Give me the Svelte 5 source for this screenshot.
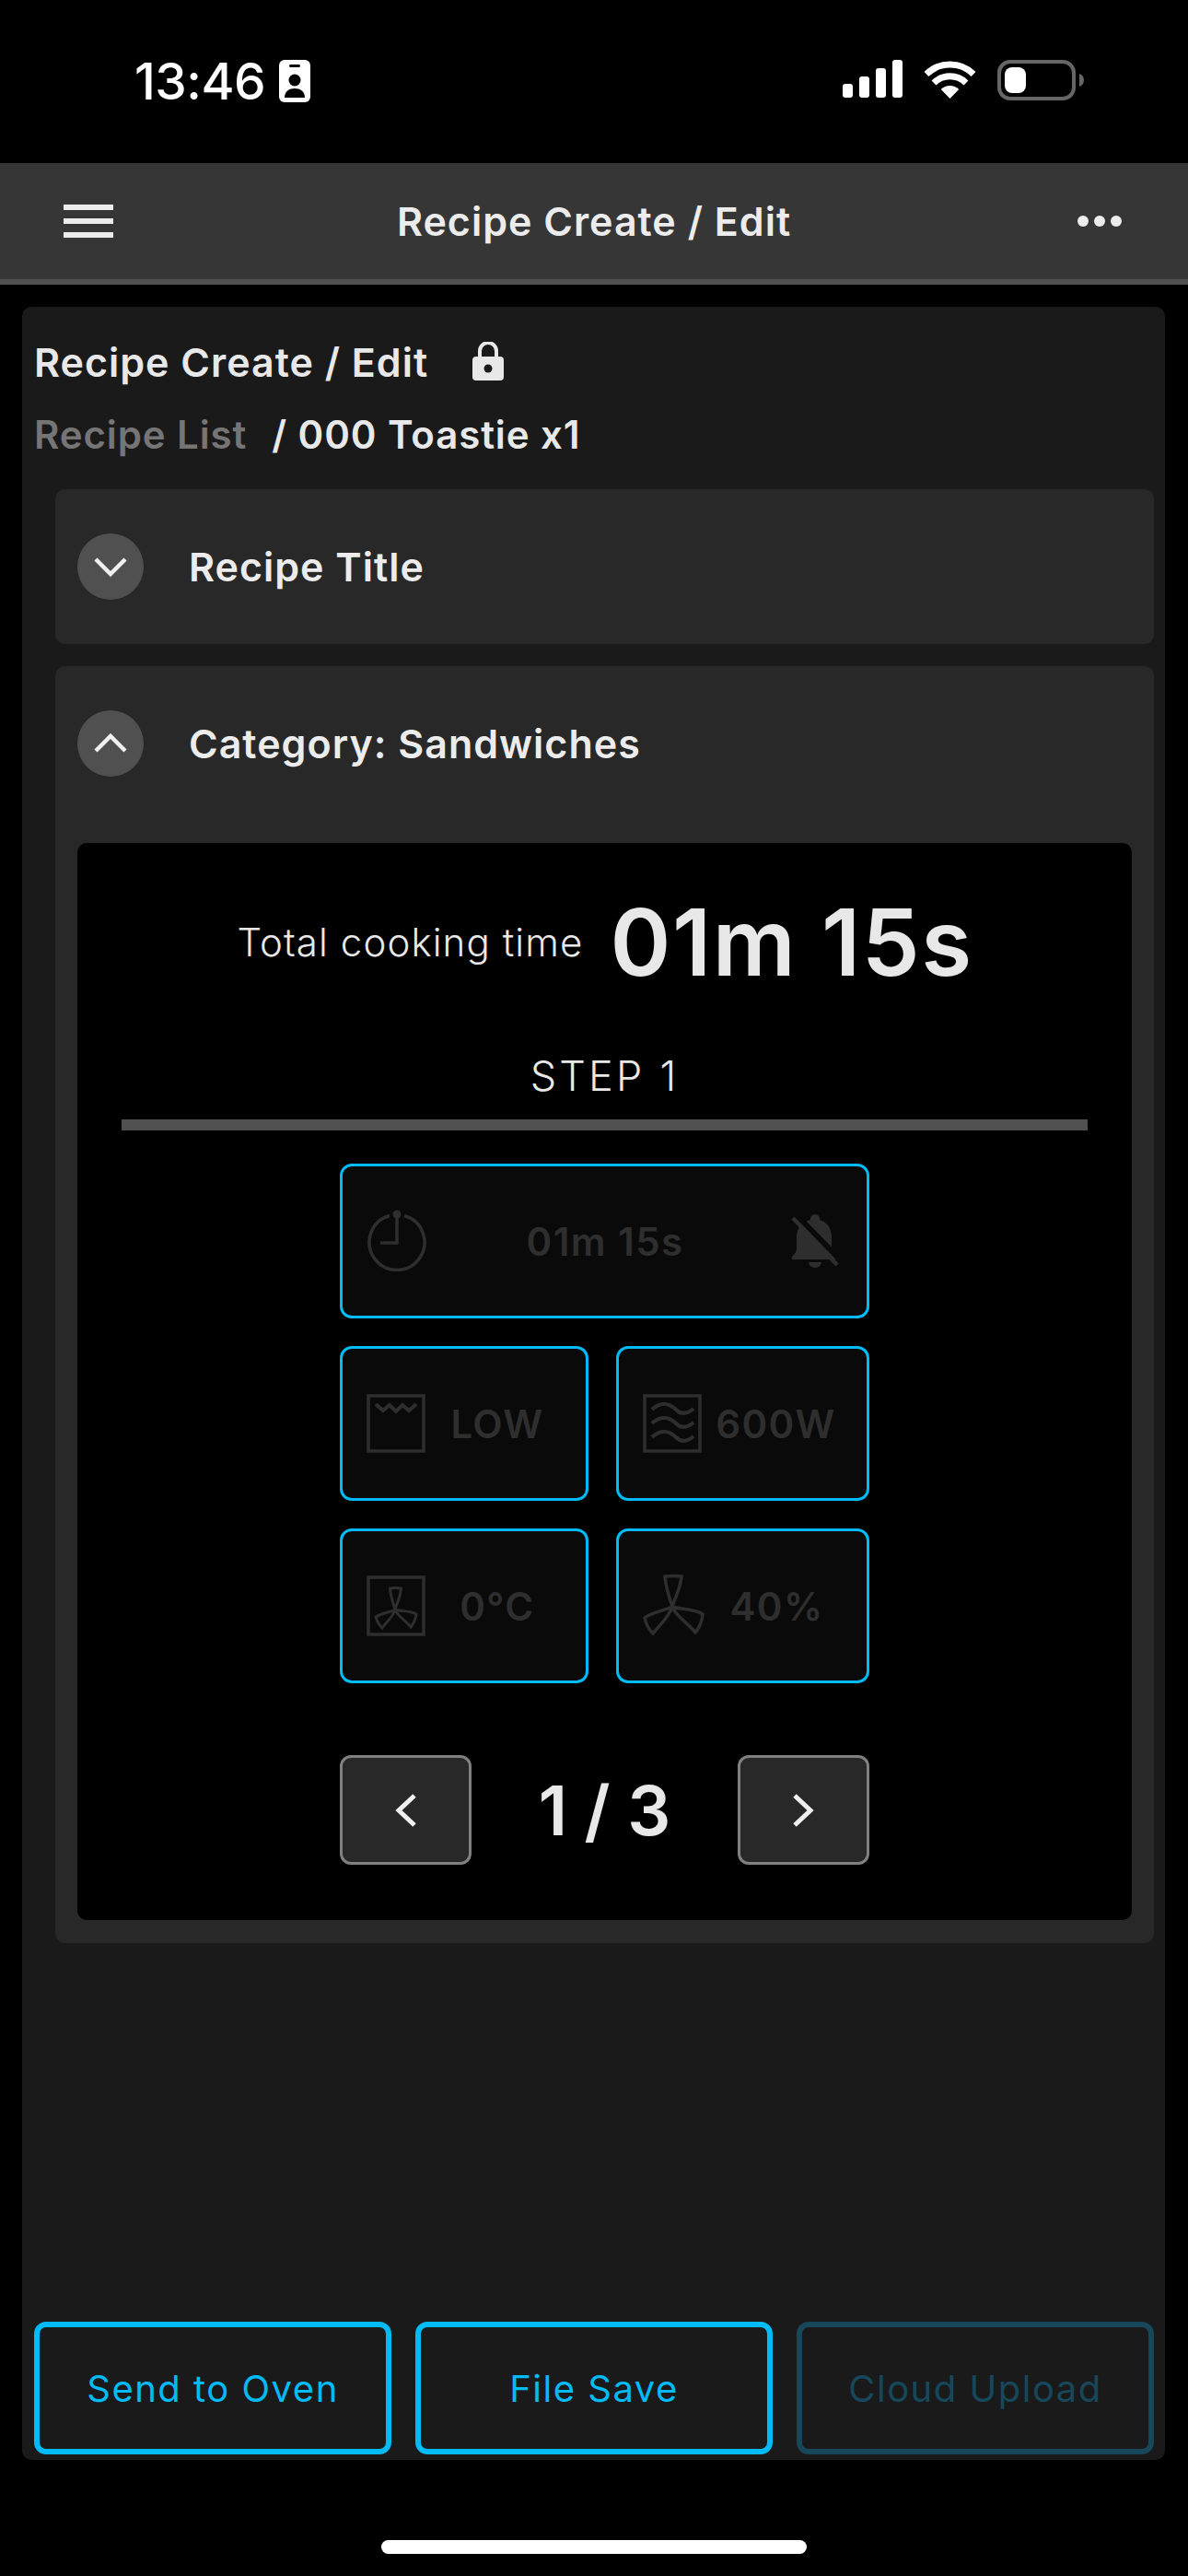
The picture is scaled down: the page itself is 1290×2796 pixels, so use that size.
<script>
  const cells = [
    { id: 'oven', label: 'LOW' },
    { id: 'micro', label: '600W' },
    { id: 'boxfan', label: '0°C' },
    { id: 'fan', label: '40%' }
  ];
  const blades = 'M32 34C29 24 25 14 24 1Q33 0 42 1C41 14 35 24 32 34C24 38 10 40 2 46Q4 56 11 63C18 54 28 46 32 34C40 37 56 36 65 42Q64 54 57 62C50 52 37 46 32 34Z';
  const smallBlades = 'M31 37C29 30 26 23 25.500 14Q31 13 37.500 14C37 23 33 30 31 37C26 40 16 41 10 45Q12 52 17 57C21 51 29 45 31 37C37 39 48 38 54 42Q53 50 48 56C43 49 34 45 31 37Z';
</script>

<div class="phone">
  <div class="status">
    <div class="clock">
      <span class="time">13:46</span>
      <svg class="badge" viewBox="0 0 34 46" width="34" height="46" aria-hidden="true">
        <rect width="34" height="46" rx="6" fill="#fff"/>
        <rect x="11" y="5" width="12" height="3" rx="1.5" fill="#000"/>
        <circle cx="17" cy="22" r="6.5" fill="#000"/>
        <path d="M6 41c0-7 5-10 11-10s11 3 11 10z" fill="#000"/>
      </svg>
    </div>
    <div class="indicators">
      <svg viewBox="0 0 65 41" width="65" height="41" fill="#fff" aria-hidden="true">
        <rect y="26" width="11" height="15" rx="3"/>
        <rect x="18" y="18" width="11" height="23" rx="3"/>
        <rect x="36" y="9" width="11" height="32" rx="3"/>
        <rect x="54" width="11" height="41" rx="3"/>
      </svg>
      <svg viewBox="0 0 57 42" width="57" height="42" aria-hidden="true">
        <path d="M3 15.5A36.500 36.500 0 0 1 54 15.500M11 25A25 25 0 0 1 46 25" fill="none" stroke="#fff" stroke-width="7"/>
        <path d="M28.500 42L18.800 32A14 14 0 0 1 38.200 32Z" fill="#fff"/>
      </svg>
      <svg viewBox="0 0 94 44" width="94" height="44" aria-hidden="true">
        <rect x="2" y="2" width="81" height="40" rx="12" fill="none" stroke="#666" stroke-width="4"/>
        <rect x="8" y="8" width="23" height="28" rx="8" fill="#fff"/>
        <path d="M89 15c3 1 5 3.500 5 7s-2 6-5 7z" fill="#666"/>
      </svg>
    </div>
  </div>

  <header class="topbar">
    <div class="burger"><i></i><i></i><i></i></div>
    <h1>Recipe Create / Edit</h1>
    <div class="dots"><i></i><i></i><i></i></div>
  </header>

  <main class="panel">
    <div class="title-row">
      <span>Recipe Create / Edit</span>
      <svg class="lock" viewBox="0 0 34 42" width="34" height="42" aria-hidden="true">
        <path d="M8 18V10a9 9 0 0 1 18 0v8" fill="none" stroke="#e8e8e8" stroke-width="4"/>
        <rect y="16" width="34" height="26" rx="4" fill="#e8e8e8"/>
        <circle cx="17" cy="29" r="4.500" fill="#1a1a1a"/>
      </svg>
    </div>
    <div class="crumbs"><span class="muted">Recipe List</span><span>/ 000 Toastie x1</span></div>

    <section class="acc">
      <div class="acc-head">
        <span class="round">
          <svg viewBox="0 0 36 22" width="36" height="22" aria-hidden="true"><path d="M2 3L18 19L34 3" fill="none" stroke="#f0f0f0" stroke-width="4.500"/></svg>
        </span>
        <span>Recipe Title</span>
      </div>
    </section>

    <section class="acc open">
      <div class="acc-head">
        <span class="round">
          <svg viewBox="0 0 36 22" width="36" height="22" aria-hidden="true"><path d="M2 19L18 3L34 19" fill="none" stroke="#f0f0f0" stroke-width="4.500"/></svg>
        </span>
        <span>Category: Sandwiches</span>
      </div>

      <div class="card">
        <div class="total">
          <span class="total-label">Total cooking time</span>
          <span class="total-value">01m 15s</span>
        </div>
        <div class="step">STEP 1</div>
        <div class="rule"></div>

        <div class="grid">
          <div class="cell wide">
            <svg class="ico" viewBox="0 0 64 68" width="64" height="68" aria-hidden="true">
              <path d="M24 6.500A30 30 0 1 0 40 6.500" fill="none" stroke="#2e2e2e" stroke-width="3.500"/>
              <circle cx="32" cy="5" r="4.500" fill="#2e2e2e"/>
              <path d="M32 8V36H14" fill="none" stroke="#2e2e2e" stroke-width="3.500"/>
            </svg>
            <span class="val">01m 15s</span>
            <svg class="bell" viewBox="0 0 52 58" width="52" height="58" aria-hidden="true">
              <path d="M26 0a5 5 0 0 1 5 6c9 3 13 10 13 19v12c0 5 3 6 5 9v3H1v-3c2-3 5-4 5-9V25c0-9 4-16 15-19a5 5 0 0 1 5-6z" fill="#2e2e2e"/>
              <path d="M19 52h14a7 6 0 0 1-14 0z" fill="#2e2e2e"/>
              <path d="M5 0L56 52" stroke="#0a0a0a" stroke-width="6"/>
              <path d="M2 4L50 55" stroke="#2e2e2e" stroke-width="4.500"/>
            </svg>
          </div>

          {#each cells as c}
            <div class="cell">
              {#if c.id === 'oven'}
                <svg class="ico" viewBox="0 0 64 64" width="64" height="64" fill="none" stroke="#2e2e2e" aria-hidden="true">
                  <rect x="2" y="2" width="60" height="60" stroke-width="3.500"/>
                  <path d="M10 11L18 18L25 12L32 19L39 12L46 18L54 11" stroke-width="4"/>
                </svg>
              {:else if c.id === 'micro'}
                <svg class="ico" viewBox="0 0 64 64" width="64" height="64" fill="none" stroke="#2e2e2e" aria-hidden="true">
                  <rect x="2" y="2" width="60" height="60" stroke-width="3.500"/>
                  <path d="M10 17C20 7 30 11 36 17S48 22 55 16M10 32C20 22 30 26 36 32S48 37 55 31M10 47C20 37 30 41 36 47S48 52 55 46" stroke-width="4"/>
                </svg>
              {:else if c.id === 'boxfan'}
                <svg class="ico" viewBox="0 0 64 66" width="64" height="66" fill="none" stroke="#2e2e2e" aria-hidden="true">
                  <rect x="2" y="2" width="60" height="62" stroke-width="3.500"/>
                  <path d={smallBlades} stroke-width="3"/>
                </svg>
              {:else}
                <svg class="ico" viewBox="0 0 66 66" width="66" height="66" fill="none" stroke="#2e2e2e" stroke-width="3.500" aria-hidden="true">
                  <path d={blades}/>
                </svg>
              {/if}
              <span class="val">{c.label}</span>
            </div>
          {/each}
        </div>

        <div class="pager">
          <button class="page-btn" aria-label="Previous">
            <svg viewBox="0 0 24 36" width="24" height="36" aria-hidden="true"><path d="M21 2L4 18L21 34" fill="none" stroke="#f0f0f0" stroke-width="5"/></svg>
          </button>
          <span class="page-num">1 / 3</span>
          <button class="page-btn" aria-label="Next">
            <svg viewBox="0 0 24 36" width="24" height="36" aria-hidden="true"><path d="M3 2L20 18L3 34" fill="none" stroke="#f0f0f0" stroke-width="5"/></svg>
          </button>
        </div>
      </div>
    </section>

    <footer class="actions">
      <button class="action">Send to Oven</button>
      <button class="action">File Save</button>
      <button class="action off">Cloud Upload</button>
    </footer>
  </main>

  <div class="home"><i></i></div>
</div>

<style>
:global(body) { margin: 0; background: #000; }

.phone {
  width: 1290px; height: 2796px;
  display: flex; flex-direction: column;
  background: #000;
  font-family: Inter, "Liberation Sans", sans-serif;
  color: #e8e8e8;
  overflow: hidden;
}

.status {
  height: 177px;
  flex-shrink: 0;
  display: flex; justify-content: space-between;
  padding: 65px 113px 0 146px;
  box-sizing: border-box;
}
.clock { display: flex; align-items: flex-start; gap: 15px; }
.time { font-size: 55px; line-height: 46px; font-weight: 500; color: #fff; letter-spacing: -0.5px; }
.indicators { display: flex; align-items: flex-start; gap: 23px; }

.topbar {
  height: 132px;
  flex-shrink: 0;
  box-sizing: border-box;
  background: #363636;
  border-bottom: 6px solid #505050;
  display: flex; align-items: center; justify-content: space-between;
  padding: 0 72px 0 69px;
}
.topbar h1 {
  margin: 0 0 0 -3px;
  font-size: 43px; font-weight: 600;
  letter-spacing: 1px;
  color: #ececec;
}
.burger { display: flex; flex-direction: column; gap: 9px; width: 54px; }
.burger i { display: block; height: 6px; background: #ececec; }
.dots { display: flex; gap: 6px; }
.dots i { display: block; width: 12px; height: 12px; border-radius: 50%; background: #ececec; }

.panel {
  flex: 1;
  margin: 24px 25px 0 24px;
  padding: 21px 12px 6px 13px;
  background: #1a1a1a;
  border-radius: 10px;
  display: flex; flex-direction: column;
}

.title-row, .crumbs {
  height: 78px;
  display: flex; align-items: center;
  font-size: 43px; font-weight: 600;
  letter-spacing: 1px;
  color: #e8e8e8;
}
.lock { margin-left: 48px; margin-top: -2px; }
.crumbs { gap: 27px; margin-bottom: 21px; font-size: 42px; letter-spacing: 0.9px; }
.muted { color: #757575; }

.acc {
  margin-left: 23px;
  background: #282828;
  border-radius: 10px;
}
.acc + .acc { margin-top: 24px; }
.acc-head {
  height: 168px;
  display: flex; align-items: center; gap: 49px;
  padding-left: 24px;
  font-size: 43px; font-weight: 600;
  letter-spacing: 1px;
  color: #ececec;
}
.round {
  width: 72px; height: 72px;
  border-radius: 50%;
  background: #505050;
  display: flex; align-items: center; justify-content: center;
}
.open { padding-bottom: 25px; }

.card {
  margin: 24px 24px 0;
  padding: 57px 48px 60px;
  background: #000;
  border-radius: 10px;
}
.total {
  height: 100px;
  display: flex; align-items: center; justify-content: center; gap: 29px;
  padding-left: 1px;
}
.total-label { font-size: 42px; font-weight: 300; letter-spacing: 1.1px; }
.total-value { font-size: 100px; font-weight: 600; letter-spacing: 1.5px; color: #e8e8e8; }
.step {
  margin-top: 66px;
  height: 60px; line-height: 60px;
  text-align: center;
  font-size: 45px; font-weight: 300;
  letter-spacing: 3.2px;
}
.rule { height: 12px; margin-top: 17px; background: #505050; }

.grid {
  width: 575px;
  margin: 36px auto 0;
  display: grid; grid-template-columns: 270px 1fr; gap: 30px;
}
.cell {
  height: 168px;
  box-sizing: border-box;
  background: #0a0a0a;
  border: 3px solid #00bbf5;
  border-radius: 13px;
  display: flex; align-items: center;
  padding: 0 18px 0 26px;
  color: #2e2e2e;
}
.wide {
  grid-column: 1 / 3;
  display: grid; grid-template-columns: 1fr auto 1fr; align-items: center;
  padding: 0 30px 0 27px;
}
.wide .val { padding-left: 4px; }
.bell { justify-self: end; }
.ico { flex-shrink: 0; overflow: visible; }
.val {
  flex: 1;
  text-align: center;
  font-size: 42px; font-weight: 600;
  letter-spacing: 1.4px;
}

.pager {
  width: 575px;
  margin: 78px auto 0;
  display: flex; align-items: center; justify-content: space-between;
}
.page-btn {
  width: 143px; height: 119px;
  padding: 0;
  box-sizing: border-box;
  background: #282828;
  border: 3px solid #808080;
  border-radius: 12px;
  display: flex; align-items: center; justify-content: center;
}
.page-num { font-size: 74px; font-weight: 600; color: #e8e8e8; }

.actions {
  margin-top: auto;
  display: grid; grid-template-columns: repeat(3, 1fr); gap: 26px;
}
.action {
  height: 144px;
  padding: 0;
  background: transparent;
  border: 6px solid #00bbf5;
  border-radius: 13px;
  font-family: inherit;
  font-size: 40px; font-weight: 400;
  letter-spacing: 1.5px;
  color: #00bbf5;
}
.action.off { border-color: #16475a; color: #16475a; }

.home {
  height: 126px;
  flex-shrink: 0;
  display: flex; justify-content: center;
  padding-top: 87px;
  box-sizing: border-box;
}
.home i { display: block; width: 462px; height: 15px; border-radius: 8px; background: #fff; }
</style>
